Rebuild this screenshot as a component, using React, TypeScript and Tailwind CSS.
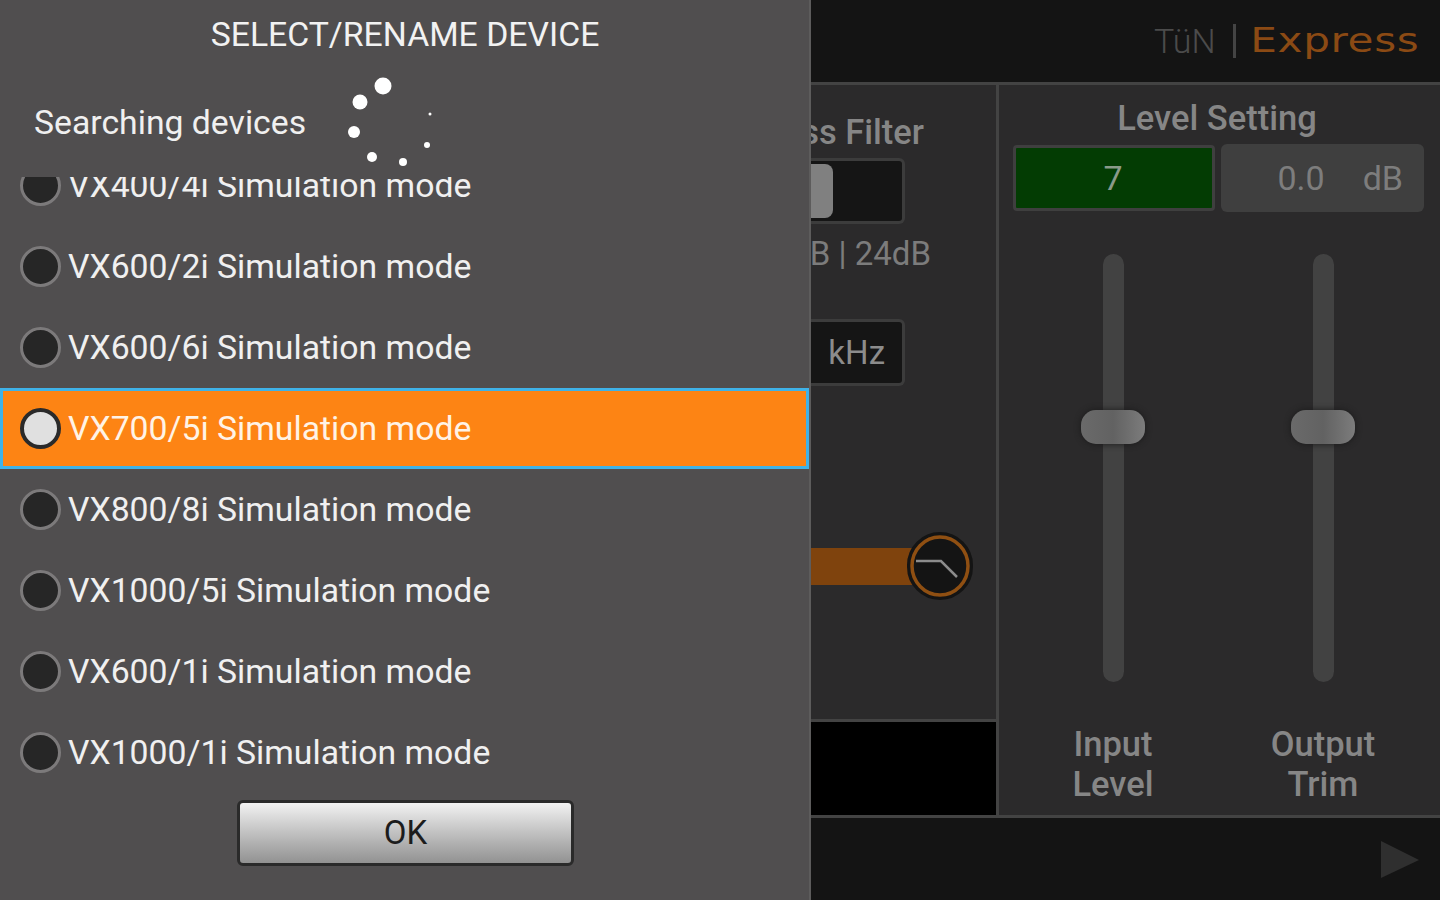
import { Fragment } from 'react';

const devices = [
  'VX400/4i Simulation mode',
  'VX600/2i Simulation mode',
  'VX600/6i Simulation mode',
  'VX700/5i Simulation mode',
  'VX800/8i Simulation mode',
  'VX1000/5i Simulation mode',
  'VX600/1i Simulation mode',
  'VX1000/1i Simulation mode',
];

const spinnerDots = [
  { cx: 43, cy: 17, r: 8.5 },
  { cx: 20, cy: 33, r: 7.5 },
  { cx: 14, cy: 63, r: 6 },
  { cx: 32, cy: 88, r: 5 },
  { cx: 63, cy: 93, r: 4 },
  { cx: 87, cy: 76, r: 3 },
  { cx: 90, cy: 45, r: 1.5 },
];

function DeviceRow({ label, selected }: { label: string; selected: boolean }) {
  return (
    <div
      className={`flex h-[81px] shrink-0 items-center gap-[7px] text-[33.75px] ${
        selected ? 'border-[3px] border-[#3fb2e8] bg-[#fd8414] pl-[17px] text-[#fff3e6]' : 'pl-[20px] text-[#f0f0f0]'
      }`}
    >
      <span
        className={`flex h-[41px] w-[41px] shrink-0 items-center justify-center rounded-full ${
          selected ? 'border-[4px] border-[#2a2a2a] bg-[#e0e0e0]' : 'border-[3px] border-[#7c7a7b] bg-[#262626]'
        }`}
      />
      <span className="pt-[1px] whitespace-nowrap">{label}</span>
    </div>
  );
}

function Fader({ label, second }: { label: string; second: string }) {
  return (
    <div className="flex w-[210px] flex-col items-center">
      <div className="relative h-[428px] w-[21px] rounded-full bg-[#424242]">
        <div className="absolute top-[156px] left-[-22px] h-[34px] w-[64px] rounded-[15px] bg-gradient-to-r from-[#6a6a6a] via-[#626262] to-[#7c7c7c] shadow-[0_0_6px_#1a1a1a]" />
      </div>
      <div className="mt-[42px] text-center text-[34.5px] leading-[40px] font-medium text-[#868686]">
        {label}
        <br />
        {second}
      </div>
    </div>
  );
}

export default function App() {
  return (
    <div className="flex h-[900px] w-[1440px] overflow-hidden font-['Roboto',sans-serif]">
      {/* Device dialog */}
      <div className="flex h-full w-[811px] shrink-0 flex-col border-r-[2px] border-[#5d5c5c] bg-[#504e4f]">
        <div className="flex h-[69px] shrink-0 items-center justify-center pt-[1px] pl-[1px] text-[33.75px] text-[#f2f2f2]">
          SELECT/RENAME DEVICE
        </div>
        <div className="flex h-[108px] shrink-0 items-center pl-[34px] text-[33.75px] text-[#f0f0f0]">
          <span className="w-[306px]">Searching devices</span>
          <svg width="100" height="108" viewBox="0 0 100 108" className="overflow-visible">
            {spinnerDots.map((d) => (
              <circle key={d.cx} cx={d.cx} cy={d.cy} r={d.r} fill="#ffffff" />
            ))}
          </svg>
        </div>
        <div className="h-[615px] shrink-0 overflow-hidden">
          <div className="mt-[-32px] flex flex-col">
            {devices.map((d) => (
              <Fragment key={d}>
                <DeviceRow label={d} selected={d.startsWith('VX700')} />
              </Fragment>
            ))}
          </div>
        </div>
        <div className="flex justify-center pt-[8px] pl-[2px]">
          <button className="h-[66px] w-[337px] rounded-[6px] border-[3px] border-[#2a2a2a] bg-gradient-to-b from-[#f2f2f2] to-[#929292] text-[33px] text-[#1c1c1c]">
            OK
          </button>
        </div>
      </div>

      {/* Dimmed app behind */}
      <div className="flex min-w-0 flex-1 flex-col bg-[#141414]">
        <div className="flex h-[85px] shrink-0 items-center justify-end border-b-[3px] border-[#434343] pr-[21px]">
          <span className="text-[34px] font-light text-[#4b4b4b]">TüN</span>
          <span className="mx-[17px] h-[34px] w-[3px] bg-[#444444]" />
          <span className="ml-[34px] origin-right scale-x-[1.277] font-['DejaVu_Sans',sans-serif] text-[33px] tracking-[0.5px] text-[#8b4a14]">
            Express
          </span>
        </div>

        <div className="flex h-[733px] shrink-0 border-b-[3px] border-[#434343] bg-[#2b2a2b]">
          {/* Filter column, cut off by the dialog */}
          <div className="flex w-[185px] shrink-0 flex-col overflow-hidden">
            <div className="flex h-[634px] shrink-0 flex-col">
              <div className="mt-[22px] flex h-[40px] justify-end pr-[72px] text-[34.5px] font-medium whitespace-nowrap text-[#868686]">
                Low Pass Filter
              </div>
              <div className="mt-[11px] flex h-[66px] w-[94px] items-center rounded-r-[6px] border-y-[3px] border-r-[3px] border-[#3c3c3c] bg-[#151515]">
                <div className="h-[54px] w-[22px] rounded-r-[8px] bg-[#808080]" />
              </div>
              <div className="mt-[5px] flex h-[40px] justify-end pr-[65px] text-[33px] whitespace-nowrap text-[#7c7c7c]">
                12dB | 24dB
              </div>
              <div className="mt-[50px] flex h-[67px] w-[94px] items-center justify-end rounded-r-[6px] border-y-[3px] border-r-[3px] border-[#3c3c3c] bg-[#151515] pr-[17px] text-[33px] text-[#8c8c8c]">
                kHz
              </div>
              <div className="relative mt-[162px] h-[37px] w-[110px] bg-[#7f430d]">
                <div className="absolute top-[-16px] left-[96px] flex h-[68px] w-[66px] items-center justify-center rounded-full border-[3px] border-[#141414] bg-[#141414]">
                  <svg width="60" height="62" viewBox="0 0 60 62">
                    <ellipse cx="30" cy="31" rx="28" ry="29" fill="none" stroke="#8f4f12" strokeWidth="3.5" />
                    <path d="M6 26 H31 L47 42" fill="none" stroke="#8c8c8c" strokeWidth="2.5" />
                  </svg>
                </div>
              </div>
            </div>
            <div className="flex-1 border-t-[3px] border-[#434343] bg-black" />
          </div>

          {/* Level setting */}
          <div className="flex flex-1 flex-col border-l-[3px] border-[#434343]">
            <div className="mt-[11px] h-[44px] pr-[5px] text-center text-[34.5px] leading-[44px] font-medium text-[#868686]">
              Level Setting
            </div>
            <div className="mt-[4px] flex items-center gap-[6px] pl-[14px]">
              <div className="flex h-[66px] w-[202px] items-center justify-center rounded-[4px] border-[3px] border-[#3f3f3f] bg-[#033c03] pr-[2px] text-[34px] text-[#8a9a8a]">
                7
              </div>
              <div className="flex h-[68px] w-[203px] items-center justify-end gap-[38px] rounded-[6px] bg-[#3f3f3f] pr-[21px] text-[34px] text-[#7d7d7d]">
                <span>0.0</span>
                <span>dB</span>
              </div>
            </div>
            <div className="mt-[42px] flex pl-[9px]">
              <Fader label="Input" second="Level" />
              <Fader label="Output" second="Trim" />
            </div>
          </div>
        </div>

        <div className="flex flex-1 items-center justify-end pr-[20px]">
          <svg width="40" height="40" viewBox="0 0 40 40">
            <path d="M1 2 L39 21 L1 39 Z" fill="#2f2f2f" />
          </svg>
        </div>
      </div>
    </div>
  );
}
